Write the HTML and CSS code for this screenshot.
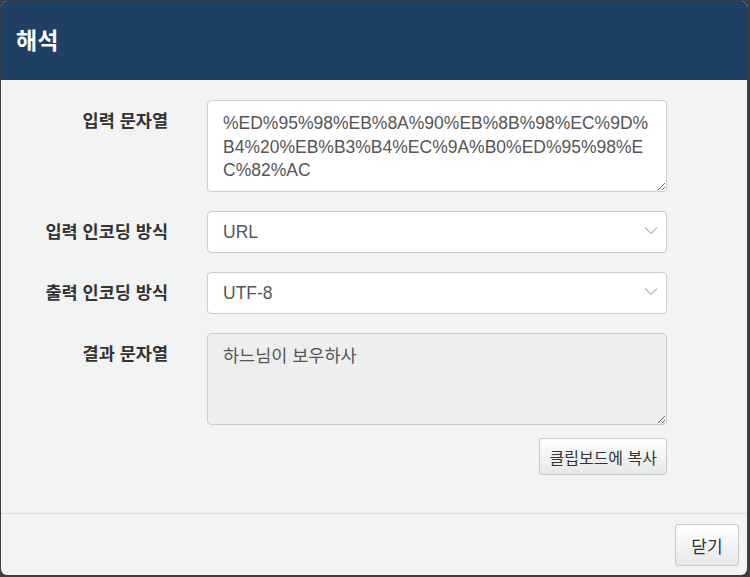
FILE: index.html
```html
<!DOCTYPE html>
<html lang="ko">
<head>
<meta charset="utf-8">
<title>해석</title>
<link rel="stylesheet" href="styles.css">
</head>
<body>
<div class="modal">
  <div class="modal-header">
    <h4 class="modal-title">해석</h4>
  </div>
  <div class="modal-body">
    <div class="row row-text">
      <label class="label">입력 문자열</label>
      <textarea class="field area" spellcheck="false">%ED%95%98%EB%8A%90%EB%8B%98%EC%9D%B4%20%EB%B3%B4%EC%9A%B0%ED%95%98%EC%82%AC</textarea>
    </div>
    <div class="row row-select">
      <label class="label">입력 인코딩 방식</label>
      <div class="field select"><span>URL</span>
        <svg class="chev" width="14" height="9" viewBox="0 0 14 9"><path d="M1 1.5 L7 7.5 L13 1.5" fill="none" stroke="#b8b8b8" stroke-width="1.1"/></svg>
      </div>
    </div>
    <div class="row row-select">
      <label class="label">출력 인코딩 방식</label>
      <div class="field select"><span>UTF-8</span>
        <svg class="chev" width="14" height="9" viewBox="0 0 14 9"><path d="M1 1.5 L7 7.5 L13 1.5" fill="none" stroke="#b8b8b8" stroke-width="1.1"/></svg>
      </div>
    </div>
    <div class="row row-text row-result">
      <label class="label">결과 문자열</label>
      <textarea class="field area readonly" readonly spellcheck="false">하느님이 보우하사</textarea>
    </div>
    <div class="row row-btn">
      <span></span>
      <div class="btn-wrap"><button class="btn">클립보드에 복사</button></div>
    </div>
  </div>
  <div class="modal-footer">
    <button class="btn btn-close">닫기</button>
  </div>
</div>
</body>
</html>
```
FILE: styles.css
```css
* { box-sizing: border-box; }
html, body { margin: 0; padding: 0; }
body {
  background: #3c3d3e;
  width: 750px;
  height: 577px;
  overflow: hidden;
  font-family: "Liberation Sans", Arial, "Noto Sans CJK KR", sans-serif;
  color: #333;
  padding: 1px 3px 2px 1px;
}
.modal {
  width: 746px;
  height: 574px;
  background: #f2f3f3;
  border-radius: 6px;
  overflow: hidden;
  display: flex;
  flex-direction: column;
}
.modal-header {
  background: #1e4064;
  height: 79px;
  display: flex;
  align-items: center;
  padding: 0 15px;
}
.modal-title {
  margin: 0;
  color: #fff;
  font-size: 23px;
  font-weight: bold;
  font-family: "Noto Sans CJK KR", sans-serif;
  line-height: 1;
  margin-top: -2px;
}
.modal-body {
  flex: 1;
  padding: 20px 0 0 0;
  border-bottom: 1px solid #dcdddd;
}
.row {
  display: grid;
  grid-template-columns: 167px 460px;
  column-gap: 39px;
}
.row-select { margin-top: 19px; }
.row-result { margin-top: 19px; }
.label {
  text-align: right;
  font-family: "Noto Sans CJK KR", sans-serif;
  font-weight: bold;
  font-size: 17.5px;
  color: #333;
  line-height: 22px;
  padding-top: 9px;
}
.field {
  border: 1px solid #cccccc;
  border-radius: 4px;
  background: #fff;
  font-family: "Liberation Sans", Arial, "Noto Sans CJK KR", sans-serif;
  font-size: 17.5px;
  color: #555;
}
.area {
  display: block;
  width: 460px;
  height: 92px;
  padding: 11px 12px 8px 15px;
  line-height: 23.5px;
  margin: 0;
  resize: vertical;
  outline: none;
  overflow: hidden;
  word-break: break-all;
}
.area.readonly {
  background: #eeeeee;
}
.select {
  height: 42px;
  display: flex;
  align-items: center;
  justify-content: space-between;
  padding: 0 8px 0 15px;
}
.chev { margin-top: -3px; }
.row-btn { margin-top: 13px; }
.btn-wrap { display: flex; justify-content: flex-end; }
.btn {
  font-family: "Noto Sans CJK KR", sans-serif;
  font-size: 16px;
  color: #333;
  background: linear-gradient(#ffffff, #e6e8e9);
  border: 1px solid #c8c9ca;
  border-radius: 3px;
  height: 37px;
  padding: 0 9px;
  line-height: 1;
}
.modal-footer {
  height: 61px;
  display: flex;
  justify-content: flex-end;
  align-items: flex-start;
  padding: 10px 8px 0 0;
}
.btn-close {
  width: 64px;
  height: 42px;
  font-size: 17px;
}
```
